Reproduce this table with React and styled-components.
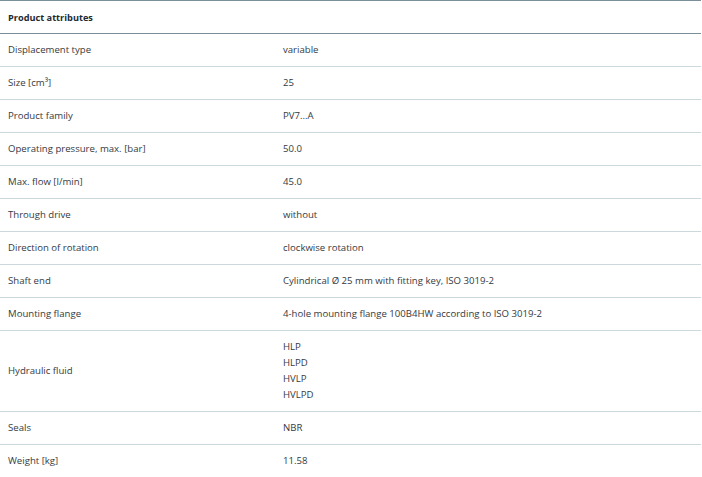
import React from "react"
import styled, {createGlobalStyle} from "styled-components"

const GlobalStyle = createGlobalStyle`
    body {
        margin: 0;
        background: #fff;
        font-family: "Open Sans", "Noto Sans", sans-serif;
        color: #353a3f;
    }
`

const Table = styled.div`
    width: 701px;
    border-top: 1px solid #7b8f9b;
`

const Header = styled.div`
    height: 32px;
    display: flex;
    align-items: center;
    padding-left: 8px;
    border-bottom: 1px solid #7b8f9b;
    font-size: 9.2px;
    font-weight: 700;
    color: #1d2a33;
`

const Row = styled.div`
    display: grid;
    grid-template-columns: 275px 1fr;
    align-items: center;
    padding: 8px 0 8px 8px;
    min-height: 16px;
    border-bottom: ${(props) => (props.last ? "none" : "1px solid #cbd8de")};
    font-size: 9.6px;
    line-height: 16px;
`

const Label = styled.div``

const Value = styled.div`
    display: flex;
    flex-direction: column;
`

const attributes = [
    ["Displacement type", ["variable"]],
    ["Size [cm³]", ["25"]],
    ["Product family", ["PV7...A"]],
    ["Operating pressure, max. [bar]", ["50.0"]],
    ["Max. flow [l/min]", ["45.0"]],
    ["Through drive", ["without"]],
    ["Direction of rotation", ["clockwise rotation"]],
    ["Shaft end", ["Cylindrical Ø 25 mm with fitting key, ISO 3019-2"]],
    ["Mounting flange", ["4-hole mounting flange 100B4HW according to ISO 3019-2"]],
    ["Hydraulic fluid", ["HLP", "HLPD", "HVLP", "HVLPD"]],
    ["Seals", ["NBR"]],
    ["Weight [kg]", ["11.58"]],
]

const App = () => {
    return (
        <>
            <GlobalStyle />
            <Table>
                <Header>Product attributes</Header>
                {attributes.map(([label, values], i) => (
                    <Row key={i} last={i === attributes.length - 1}>
                        <Label>{label}</Label>
                        <Value>
                            {values.map((v) => (
                                <span key={v}>{v}</span>
                            ))}
                        </Value>
                    </Row>
                ))}
            </Table>
        </>
    )
}

export default App
